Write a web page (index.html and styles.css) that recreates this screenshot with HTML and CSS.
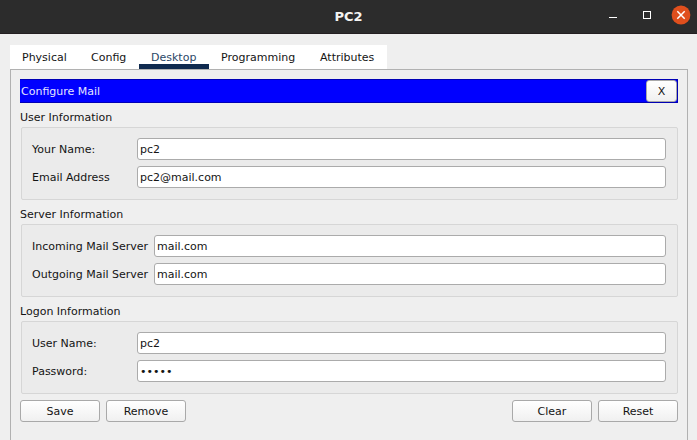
FILE: index.html
```html
<!DOCTYPE html>
<html lang="en">
<head>
<meta charset="utf-8">
<title>PC2</title>
<link rel="stylesheet" href="styles.css">
</head>
<body>
<header class="titlebar">
  <h1 class="title">PC2</h1>
  <div class="controls">
    <svg class="control" viewBox="0 0 20 20"><path d="M6 12.5h8" stroke="#fff"/></svg>
    <svg class="control" viewBox="0 0 20 20"><rect x="6.5" y="6.5" width="7" height="7" fill="none" stroke="#fff"/></svg>
    <svg class="control" viewBox="0 0 20 20"><circle cx="10" cy="10" r="9.4" fill="#e04f1d"/><path d="M6.3 6.3l7.4 7.4M13.7 6.3l-7.4 7.4" stroke="#fff" stroke-width="1.5"/></svg>
  </div>
</header>
<nav class="tabs">
  <a class="tab tab-physical">Physical</a>
  <a class="tab tab-config">Config</a>
  <a class="tab tab-desktop active">Desktop</a>
  <a class="tab tab-programming">Programming</a>
  <a class="tab tab-attributes">Attributes</a>
</nav>
<main class="panel">
  <div class="banner"><span>Configure Mail</span><button class="btn close">X</button></div>
  <section class="section">
    <h2>User Information</h2>
    <div class="group">
      <label>Your Name:</label><div class="field">pc2</div>
      <label>Email Address</label><div class="field">pc2@mail.com</div>
    </div>
  </section>
  <section class="section">
    <h2>Server Information</h2>
    <div class="group wide">
      <label>Incoming Mail Server</label><div class="field">mail.com</div>
      <label>Outgoing Mail Server</label><div class="field">mail.com</div>
    </div>
  </section>
  <section class="section">
    <h2>Logon Information</h2>
    <div class="group">
      <label>User Name:</label><div class="field">pc2</div>
      <label>Password:</label><div class="field">•••••</div>
    </div>
  </section>
  <div class="actions">
    <button class="btn">Save</button>
    <button class="btn">Remove</button>
    <button class="btn push">Clear</button>
    <button class="btn">Reset</button>
  </div>
</main>
</body>
</html>
```
FILE: styles.css
```css
* { box-sizing: border-box; }
body {
  display: flex;
  flex-direction: column;
  height: 100vh;
  margin: 0;
  background: #efefef;
  color: #141414;
  font: 11px/14px "DejaVu Sans", sans-serif;
}
.titlebar {
  height: 34px;
  flex: none;
  display: grid;
  grid-template-columns: 1fr auto 1fr;
  background: #2c2c2c;
  border-bottom: 1px solid #241f21;
}
.title {
  grid-column: 2;
  margin: 0;
  font: bold 13px/33px "DejaVu Sans", sans-serif;
  color: #f4f4f2;
}
.controls {
  display: flex;
  justify-content: flex-end;
  gap: 14px;
  padding: 5px 6px 0 0;
}
.control { width: 20px; height: 20px; }
.tabs {
  display: flex;
  flex: none;
  width: 377px;
  height: 24px;
  margin: 11px 0 0 10px;
  background: #fff;
}
.tab { padding: 6px 0 0 12px; }
.tab-physical { width: 69px; }
.tab-config { width: 60px; }
.tab-desktop { width: 70px; }
.tab-programming { width: 99px; }
.tab-attributes { width: 79px; }
.tab.active {
  color: #2c4868;
  border-bottom: 5px solid #0f2a4f;
}
.panel {
  flex: 1;
  width: 678px;
  margin-left: 10px;
  padding: 9px 9px 0;
  border: 1px solid #b1b1b1;
  border-bottom: 0;
}
.banner {
  display: flex;
  justify-content: space-between;
  height: 24px;
  padding: 0 0 0 1px;
  border: solid #0000b5;
  border-width: 1px 1px 1px 0;
  background: #00f;
  color: #e4e4ff;
  line-height: 23px;
}
.section h2 {
  margin: 0;
  height: 24px;
  font: inherit;
  line-height: 30px;
}
.group {
  display: grid;
  grid-template-columns: 105px 1fr;
  grid-auto-rows: 22px;
  row-gap: 6px;
  height: 73px;
  margin-left: 1px;
  padding: 10px 11px 0 10px;
  border: 1px solid #d6d6d6;
  border-radius: 2px;
  background: #ebebeb;
  line-height: 24px;
}
.group.wide { grid-template-columns: 122px 1fr; }
.field {
  padding-left: 2px;
  border: 1px solid #ababab;
  border-radius: 3px;
  background: #fff;
  line-height: 22px;
}
.actions { display: flex; gap: 6px; margin-top: 6px; }
.btn {
  width: 80px;
  height: 22px;
  padding: 2px 0 0;
  border: 1px solid #a9a9a9;
  border-radius: 3px;
  background: linear-gradient(#fff, #f0f0f0);
  color: inherit;
  font: inherit;
}
.push { margin-left: auto; }
.close { width: 31px; padding: 1px 0 0; line-height: 14px; color: #141414; }
```
